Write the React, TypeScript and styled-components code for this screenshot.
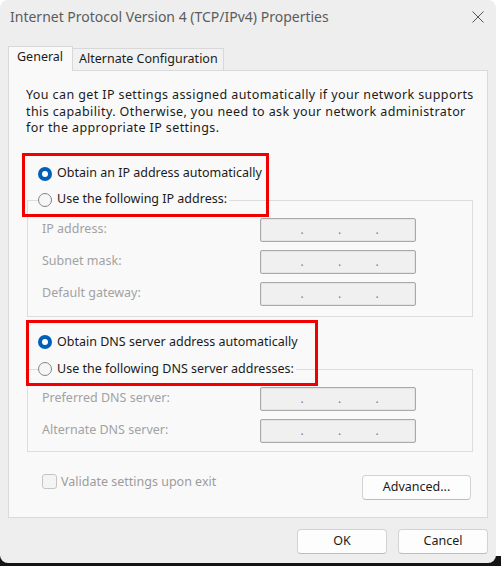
import * as React from "react";
import styled, { createGlobalStyle } from "styled-components";

const GlobalStyle = createGlobalStyle`
  html, body {
    margin: 0;
    padding: 0;
    background: #fff;
  }
`;

const Screen = styled.div`
  width: 501px;
  height: 566px;
  overflow: hidden;
  background: linear-gradient(to bottom, #fff 0, #fff 556px, #141414 556px);
`;

const Window = styled.div`
  width: 496px;
  height: 563px;
  box-sizing: border-box;
  background: #eeeeee;
  border-radius: 8px;
  display: flex;
  flex-direction: column;
  font: 400 12.5px/1.3 "Noto Sans", "Liberation Sans", sans-serif;
  color: #1b1b1b;
`;

const TitleBar = styled.div`
  height: 34px;
  display: flex;
  align-items: center;
  justify-content: space-between;
  padding: 0 12px 0 10px;
`;

const Title = styled.div`
  font-size: 14px;
  color: #5c5c5c;
  white-space: nowrap;
`;

const Body = styled.div`
  padding: 12px 8px 0;
  display: flex;
  flex-direction: column;
`;

const Tabs = styled.div`
  display: flex;
  align-items: flex-end;
  height: 25px;
  position: relative;
  z-index: 1;
  margin-bottom: -1px;
`;

const Tab = styled.div<{ $active?: boolean }>`
  box-sizing: border-box;
  display: flex;
  align-items: center;
  white-space: nowrap;
  border: 1px solid #d8d8d8;
  border-bottom: none;
  ${(p) =>
    p.$active
      ? `
    height: 25px;
    padding: 0 9px 3px 8px;
    background: #f9f9f9;
  `
      : `
    height: 22px;
    margin-bottom: 1px;
    padding: 0 5px 0 6px;
    border-left: none;
    background: #f1f1f1;
  `}
`;

const Panel = styled.div`
  height: 448px;
  box-sizing: border-box;
  border: 1px solid #dadada;
  background: #f9f9f9;
  padding: 16px 14px 18px 17px;
  display: flex;
  flex-direction: column;
`;

const Description = styled.p`
  margin: 0;
  line-height: 16.5px;
  letter-spacing: 0.4px;
  white-space: nowrap;
`;

const RadioSet = styled.div<{ $top: number; $box: string }>`
  position: relative;
  z-index: 1;
  width: fit-content;
  margin-top: ${(p) => p.$top}px;
  margin-left: 1px;

  &::after {
    content: "";
    position: absolute;
    inset: ${(p) => p.$box};
    border: 3px solid #f20000;
    pointer-events: none;
  }
`;

const RadioRow = styled.div<{ $h: number }>`
  height: ${(p) => p.$h}px;
  display: flex;
  align-items: center;
  padding-left: 11px;
`;

const RadioDot = styled.span<{ $checked?: boolean }>`
  position: relative;
  width: 14px;
  height: 14px;
  box-sizing: border-box;
  border-radius: 50%;
  flex: none;
  ${(p) =>
    p.$checked
      ? `
    background: #005fb8;
    &::after {
      content: "";
      position: absolute;
      left: 4px;
      top: 4px;
      width: 6px;
      height: 6px;
      border-radius: 50%;
      background: #fff;
    }
  `
      : `
    border: 1px solid #868686;
    background: #f6f6f6;
  `}
`;

const RadioLabel = styled.span`
  background: #f9f9f9;
  padding: 0 2px 0 5px;
  white-space: nowrap;
`;

const GroupBox = styled.div<{ $top: number; $padTop: number; $bottom: number }>`
  margin: ${(p) => p.$top}px 0 0 1px;
  border: 1px solid #dddddd;
  padding: ${(p) => p.$padTop}px 14px ${(p) => p.$bottom}px;
  display: grid;
  grid-template-columns: 218px 156px;
  row-gap: 8px;
  align-items: center;
`;

const FieldLabel = styled.span`
  color: #a2a2a2;
  white-space: nowrap;
`;

const IpBox = styled.div`
  height: 24px;
  box-sizing: border-box;
  border: 1px solid #a9a9a9;
  box-shadow: inset 0 0 0 1px #e4e4e4;
  border-radius: 2px;
  background: #f0f0f0;
  display: flex;
  padding-left: 39px;
  gap: 33.5px;
  line-height: 22px;
`;

const Dot = styled.span`
  width: 4px;
  text-align: center;
  color: #7c7c8c;
  font-size: 12px;
`;

const OptionsRow = styled.div`
  margin-top: 23px;
  display: flex;
  justify-content: space-between;
  align-items: flex-start;
  padding: 0 2px 0 16px;
`;

const CheckRow = styled.label`
  display: flex;
  align-items: center;
  gap: 4px;
  margin-top: -1px;
  color: #9c9c9c;
  white-space: nowrap;
`;

const CheckBox = styled.span`
  width: 15px;
  height: 15px;
  box-sizing: border-box;
  border: 1px solid #c4c4c4;
  border-radius: 3px;
  background: #f4f4f4;
`;

const Button = styled.button<{ $w: number }>`
  width: ${(p) => p.$w}px;
  height: 25px;
  box-sizing: border-box;
  border: 1px solid #d2d2d2;
  border-bottom-color: #bdbdbd;
  border-radius: 4px;
  background: #fdfdfd;
  font: inherit;
  color: #1b1b1b;
  padding: 0;
`;

const Footer = styled.div`
  margin-top: 11px;
  display: flex;
  justify-content: flex-end;
  gap: 11px;
`;

function CloseIcon() {
  return (
    <svg width="12" height="12" viewBox="0 0 12 12">
      <path d="M0.5 0.5 L11.5 11.5 M11.5 0.5 L0.5 11.5" stroke="#555" strokeWidth="1" fill="none" />
    </svg>
  );
}

function IpField() {
  return (
    <IpBox>
      <Dot>.</Dot>
      <Dot>.</Dot>
      <Dot>.</Dot>
    </IpBox>
  );
}

function Fields({ labels }: { labels: string[] }) {
  return (
    <>
      {labels.map((l) => (
        <React.Fragment key={l}>
          <FieldLabel>{l}</FieldLabel>
          <IpField />
        </React.Fragment>
      ))}
    </>
  );
}

export default function App() {
  return (
    <Screen>
      <GlobalStyle />
      <Window>
        <TitleBar>
          <Title>Internet Protocol Version 4 (TCP/IPv4) Properties</Title>
          <CloseIcon />
        </TitleBar>
        <Body>
          <Tabs>
            <Tab $active>General</Tab>
            <Tab>Alternate Configuration</Tab>
          </Tabs>
          <Panel>
            <Description>
              You can get IP settings assigned automatically if your network supports
              <br />
              this capability. Otherwise, you need to ask your network administrator
              <br />
              for the appropriate IP settings.
            </Description>

            <RadioSet $top={24} $box="-8px -5px -4px -5px">
              <RadioRow $h={26}>
                <RadioDot $checked />
                <RadioLabel>Obtain an IP address automatically</RadioLabel>
              </RadioRow>
              <RadioRow $h={26}>
                <RadioDot />
                <RadioLabel>Use the following IP address:</RadioLabel>
              </RadioRow>
            </RadioSet>
            <GroupBox $top={-13} $padTop={17} $bottom={10}>
              <Fields labels={["IP address:", "Subnet mask:", "Default gateway:"]} />
            </GroupBox>

            <RadioSet $top={12} $box="-9px -18px -3px -1px">
              <RadioRow $h={27}>
                <RadioDot $checked />
                <RadioLabel>Obtain DNS server address automatically</RadioLabel>
              </RadioRow>
              <RadioRow $h={27}>
                <RadioDot />
                <RadioLabel>Use the following DNS server addresses:</RadioLabel>
              </RadioRow>
            </RadioSet>
            <GroupBox $top={-14} $padTop={17} $bottom={8}>
              <Fields labels={["Preferred DNS server:", "Alternate DNS server:"]} />
            </GroupBox>

            <OptionsRow>
              <CheckRow>
                <CheckBox />
                Validate settings upon exit
              </CheckRow>
              <Button $w={109}>Advanced...</Button>
            </OptionsRow>
          </Panel>
          <Footer>
            <Button $w={90}>OK</Button>
            <Button $w={90}>Cancel</Button>
          </Footer>
        </Body>
      </Window>
    </Screen>
  );
}
